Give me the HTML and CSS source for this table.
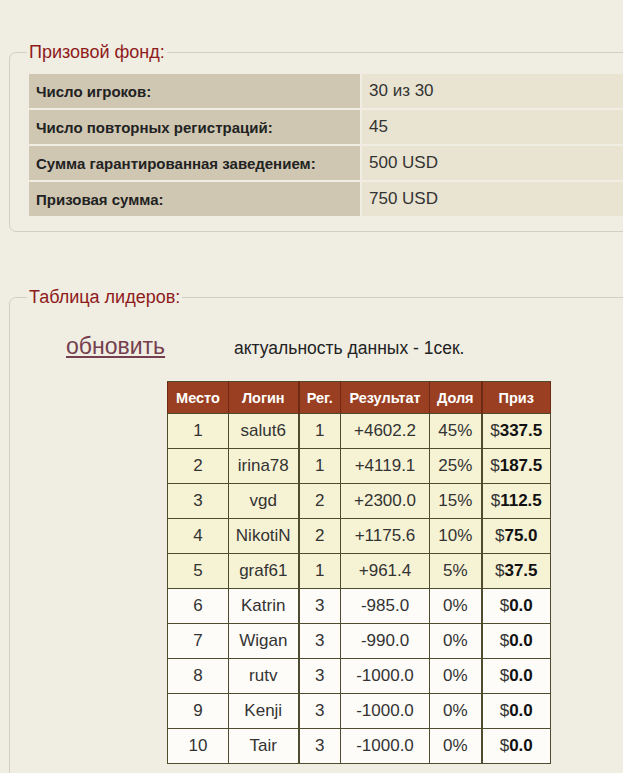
FILE: index.html
```html
<!DOCTYPE html>
<html lang="ru">
  <head>
    <meta charset="UTF-8" />
    <meta name="viewport" content="width=device-width, initial-scale=1.0" />
    <title>Турнир</title>
    <link rel="stylesheet" href="styles.css">
  </head>
  <body>
    <div class="page">
      <fieldset class="box prize-box">
        <legend>Призовой фонд:</legend>
        <table class="info-table">
          <tr>
            <th>Число игроков:</th>
            <td>30 из 30</td>
          </tr>
          <tr>
            <th>Число повторных регистраций:</th>
            <td>45</td>
          </tr>
          <tr>
            <th>Сумма гарантированная заведением:</th>
            <td>500 USD</td>
          </tr>
          <tr>
            <th>Призовая сумма:</th>
            <td>750 USD</td>
          </tr>
        </table>
      </fieldset>

      <fieldset class="box leaders-box">
        <legend>Таблица лидеров:</legend>
        <div class="refresh-row">
          <a href="#" class="refresh-link">обновить</a>
          <span class="refresh-note">актуальность данных - 1сек.</span>
        </div>
        <table class="leaders">
          <thead>
            <tr>
              <th class="col-place">Место</th>
              <th class="col-login group-end">Логин</th>
              <th class="col-reg">Рег.</th>
              <th class="col-result">Результат</th>
              <th class="col-share group-end">Доля</th>
              <th class="col-prize">Приз</th>
            </tr>
          </thead>
          <tbody id="leaders-body"></tbody>
        </table>
      </fieldset>
    </div>
    <script>
      // --- Leaderboard data ---
      const leaders = [
        [1, "salut6", 1, "+4602.2", "45%", "337.5"],
        [2, "irina78", 1, "+4119.1", "25%", "187.5"],
        [3, "vgd", 2, "+2300.0", "15%", "112.5"],
        [4, "NikotiN", 2, "+1175.6", "10%", "75.0"],
        [5, "graf61", 1, "+961.4", "5%", "37.5"],
        [6, "Katrin", 3, "-985.0", "0%", "0.0"],
        [7, "Wigan", 3, "-990.0", "0%", "0.0"],
        [8, "rutv", 3, "-1000.0", "0%", "0.0"],
        [9, "Kenji", 3, "-1000.0", "0%", "0.0"],
        [10, "Tair", 3, "-1000.0", "0%", "0.0"]
      ];

      const body = document.getElementById("leaders-body");

      leaders.forEach(([place, login, reg, result, share, prize]) => {
        const row = document.createElement("tr");
        // rows with a prize get the yellow background
        row.className = share === "0%" ? "no-prize" : "in-prize";
        row.innerHTML = `
          <td>${place}</td>
          <td class="group-end">${login}</td>
          <td>${reg}</td>
          <td>${result}</td>
          <td class="group-end">${share}</td>
          <td>$<b>${prize}</b></td>`;
        body.appendChild(row);
      });
    </script>
  </body>
</html>
```

FILE: styles.css
```css
/* Base */
* {
  box-sizing: border-box;
}

:root {
  --page-bg: #f0ede2;
  --frame: #d3cfc4;
  --legend: #8e1b1b;
  --label-bg: #cfc7b2;
  --value-bg: #e9e3d1;
  --head-bg: #9a3f22;
  --grid: #4f4b2e;
  --row-prize: #f6f2d4;
  --row-plain: #fdfcf8;
  --text: #2c2c2c;
  --link: #74404f;
}

html,
body {
  margin: 0;
  padding: 0;
  overflow-x: hidden;
}

body {
  background-color: var(--page-bg);
  color: var(--text);
  font-family: "Liberation Sans", Arial, sans-serif;
}

.page {
  width: 718px;
  padding: 42px 9px 0;
}

/* Framed sections */
.box {
  margin: 0;
  padding: 0 19px 13px;
  border: 1px solid var(--frame);
  border-radius: 7px;
}

.box legend {
  padding: 0 2px;
  margin-left: -2px;
  font-size: 18px;
  color: var(--legend);
}

.leaders-box {
  margin-top: 55px;
  padding-bottom: 40px;
}

/* Prize fund info */
.info-table {
  width: 100%;
  margin-top: 9px;
  border-spacing: 2px;
  margin-left: -2px;
}

.info-table th,
.info-table td {
  height: 34px;
  padding: 0 7px;
  vertical-align: middle;
  text-align: left;
}

.info-table th {
  width: 331px;
  background-color: var(--label-bg);
  font-size: 15px;
  font-weight: bold;
  color: #222;
}

.info-table td {
  background-color: var(--value-bg);
  font-size: 17px;
  color: #333;
}

/* Refresh line */
.refresh-row {
  display: flex;
  align-items: baseline;
  padding: 25px 0 0 37px;
}

.refresh-link {
  width: 168px;
  font-size: 23px;
  color: var(--link);
}

.refresh-note {
  font-size: 17.5px;
  color: #222;
}

/* Leaderboard */
.leaders {
  margin: 21px auto 0;
  border-collapse: collapse;
  text-align: center;
  font-size: 17px;
  color: #333;
}

.leaders th {
  height: 32px;
  padding: 0;
  background-color: var(--head-bg);
  color: #fff;
  font-size: 14.5px;
  font-weight: bold;
  border: 1px solid var(--grid);
  border-left-color: #6e2a14;
  border-right-color: #6e2a14;
}

.leaders td {
  height: 35px;
  padding: 0;
  border: 1px solid var(--grid);
}

.leaders .group-end {
  border-right-width: 2px;
}

.leaders b {
  color: #111;
}

.in-prize td {
  background-color: var(--row-prize);
}

.no-prize td {
  background-color: var(--row-plain);
}

.col-place { width: 61px; }
.col-login { width: 70px; }
.col-reg { width: 42px; }
.col-result { width: 89px; }
.col-share { width: 52px; }
.col-prize { width: 69px; }
```
